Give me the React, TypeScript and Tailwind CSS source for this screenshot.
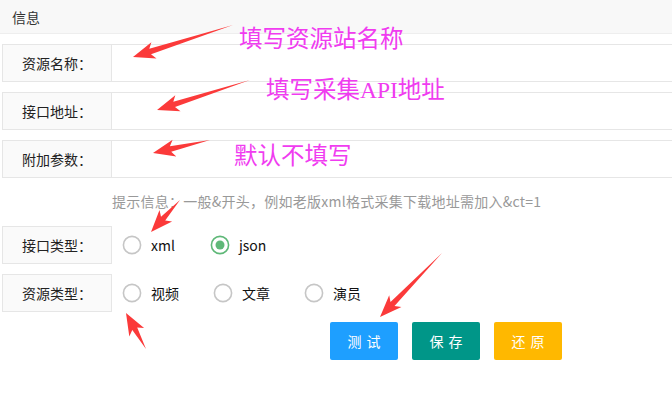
import React from 'react';

const font = { fontFamily: '"Noto Sans CJK SC", "Noto Sans", sans-serif' };

// tail -> tip arrows, drawn over the form like a screenshot markup
const arrows = [
  { t: [233, 25], h: [133, 57] },
  { t: [250, 80], h: [157, 110] },
  { t: [210, 140], h: [153, 153] },
  { t: [180, 200], h: [151, 232] },
  { t: [146, 349], h: [126, 313] },
  { t: [442, 253], h: [380, 317] },
];

function arrowPath(t: number[], h: number[]) {
  const dx = h[0] - t[0];
  const dy = h[1] - t[1];
  const len = Math.hypot(dx, dy);
  const ux = dx / len;
  const uy = dy / len;
  const nx = -uy;
  const ny = ux;
  const headLen = 19;
  const bx = h[0] - ux * headLen;
  const by = h[1] - uy * headLen;
  const back = 3;
  const p = (x: number, y: number) => `${x.toFixed(1)},${y.toFixed(1)}`;
  return [
    p(t[0], t[1]),
    p(bx + nx * 2.8 + ux * 1, by + ny * 2.8 + uy * 1),
    p(bx + nx * 8.5 - ux * back, by + ny * 8.5 - uy * back),
    p(h[0], h[1]),
    p(bx - nx * 8.5 - ux * back, by - ny * 8.5 - uy * back),
    p(bx - nx * 2.8 + ux * 1, by - ny * 2.8 + uy * 1),
  ].join(' ');
}

function Radio({ label, checked }: { label: string; checked?: boolean }) {
  return (
    <div className="flex items-center">
      <svg width="20" height="20" viewBox="0 0 20 20">
        <circle cx="10" cy="10" r="8.6" fill="white" stroke={checked ? '#5FB878' : '#c6c6c6'} strokeWidth="1.6" />
        {checked && <circle cx="10" cy="10" r="4.5" fill="#5FB878" />}
      </svg>
      <span className="ml-[9px] text-sm text-[#111]">{label}</span>
    </div>
  );
}

function Label({ children }: { children: React.ReactNode }) {
  return (
    <div className="w-[110px] h-[38px] shrink-0 border border-[#e6e6e6] bg-[#fafafa] flex items-center justify-center text-sm text-[#222]">
      {children}
    </div>
  );
}

function InputRow({ label }: { label: string }) {
  return (
    <div className="flex ml-[2px]">
      <Label>{label}</Label>
      <div className="flex-1 h-[38px] border-y border-[#e6e6e6] bg-white" />
    </div>
  );
}

export default function App() {
  return (
    <div className="relative w-[672px] h-[395px] overflow-hidden bg-white" style={font}>
      <div className="h-[34px] bg-[#f8f8f8] border-b border-[#eeeeee] flex items-center pl-[12px] text-sm text-[#333]">
        信息
      </div>

      <div className="flex flex-col gap-[10px] pt-[10px]">
        <InputRow label="资源名称：" />
        <InputRow label="接口地址：" />
        <InputRow label="附加参数：" />
      </div>

      <div className="h-[48px] flex items-center pl-[112px] pb-[10px] pt-[8px] text-sm text-[#999] tracking-[0.25px]">
        提示信息：一般&amp;开头，例如老版xml格式采集下载地址需加入&amp;ct=1
      </div>

      <div className="flex flex-col gap-[10px]">
        <div className="flex ml-[2px] items-center">
          <Label>接口类型：</Label>
          <div className="flex items-center gap-[35px] ml-[10px]">
            <Radio label="xml" />
            <Radio label="json" checked />
          </div>
        </div>
        <div className="flex ml-[2px] items-center">
          <Label>资源类型：</Label>
          <div className="flex items-center gap-[34px] ml-[10px]">
            <Radio label="视频" />
            <Radio label="文章" />
            <Radio label="演员" />
          </div>
        </div>
      </div>

      <div className="flex gap-[14px] ml-[330px] mt-[10px]">
        <button className="w-[68px] h-[38px] rounded-[2px] bg-[#1E9FFF] text-white text-sm tracking-[5px] pl-[5px]">测试</button>
        <button className="w-[68px] h-[38px] rounded-[2px] bg-[#009688] text-white text-sm tracking-[5px] pl-[5px]">保存</button>
        <button className="w-[68px] h-[38px] rounded-[2px] bg-[#FFB800] text-white text-sm tracking-[5px] pl-[5px]">还原</button>
      </div>

      <svg className="absolute inset-0 pointer-events-none" width="672" height="395">
        {arrows.map((a, i) => (
          <polygon key={i} points={arrowPath(a.t, a.h)} fill="#fb3a3a" />
        ))}
      </svg>

      <div className="absolute left-[239px] top-[23px] text-[23.5px] leading-[32px] text-[#f03cf0] whitespace-nowrap" style={{ fontFamily: '"Liberation Serif", "Noto Sans CJK SC", serif' }}>
        填写资源站名称
      </div>
      <div className="absolute left-[266px] top-[74px] text-[23.5px] leading-[32px] text-[#f03cf0] whitespace-nowrap" style={{ fontFamily: '"Liberation Serif", "Noto Sans CJK SC", serif' }}>
        填写采集API地址
      </div>
      <div className="absolute left-[234px] top-[140px] text-[23.5px] leading-[32px] text-[#f03cf0] whitespace-nowrap" style={{ fontFamily: '"Liberation Serif", "Noto Sans CJK SC", serif' }}>
        默认不填写
      </div>
    </div>
  );
}
